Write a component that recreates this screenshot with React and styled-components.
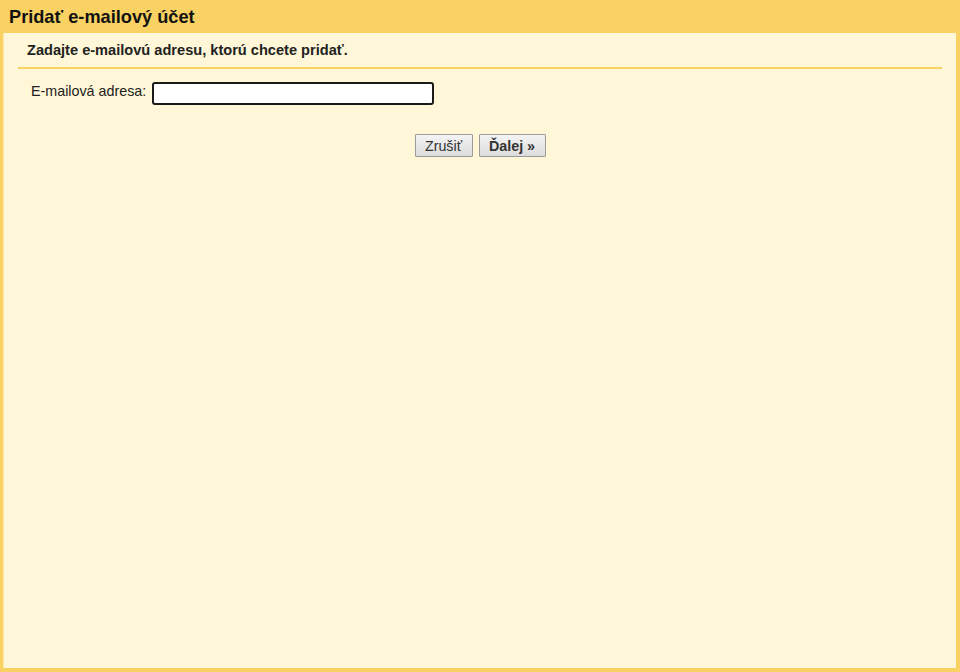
import React from 'react'
import styled, { createGlobalStyle } from 'styled-components'

const GlobalStyle = createGlobalStyle`
  html, body {
    margin: 0;
    padding: 0;
  }
  body {
    font-family: "Liberation Sans", Arial, sans-serif;
    color: #222;
  }
`

export default function App() {
  return (
    <>
      <GlobalStyle />
      <Frame>
        <TitleBar>Pridať e-mailový účet</TitleBar>
        <Panel>
          <Intro>Zadajte e-mailovú adresu, ktorú chcete pridať.</Intro>
          <Divider />
          <FieldRow>
            <Label htmlFor="email">E-mailová adresa:</Label>
            <TextInput id="email" type="text" />
          </FieldRow>
          <Actions>
            <Button type="button">Zrušiť</Button>
            <Button type="button" primary>Ďalej »</Button>
          </Actions>
        </Panel>
      </Frame>
    </>
  )
}

const Frame = styled.div`
  box-sizing: border-box;
  height: 672px;
  display: flex;
  flex-direction: column;
  background: #fad163;
  padding: 0 4px 4px 3px;
`

const TitleBar = styled.h1`
  box-sizing: border-box;
  margin: 0 0 0 -3px;
  height: 33px;
  display: flex;
  align-items: center;
  padding: 2px 0 0 9px;
  font-size: 18.2px;
  font-weight: bold;
  color: #111;
`

const Panel = styled.div`
  flex: 1;
  background: #fff7d7;
  border-left: 1px solid #ffe9a8;
  padding: 8px 14px 0 14px;
`

const Intro = styled.div`
  padding-left: 9px;
  font-size: 14.6px;
  font-weight: bold;
  line-height: 18px;
  color: #222;
`

const Divider = styled.div`
  height: 2px;
  background: #fad163;
  margin-top: 8px;
`

const FieldRow = styled.div`
  display: flex;
  align-items: center;
  gap: 6px;
  margin-top: 13px;
  padding-left: 13px;
`

const Label = styled.label`
  font-size: 14.3px;
  color: #222;
  margin-top: -5px;
`

const TextInput = styled.input`
  box-sizing: border-box;
  width: 282px;
  height: 23px;
  border: 2px solid #1a1a1a;
  border-radius: 3px;
  background: #fff;
  outline: none;
  padding: 0 4px;
  font: 14px "Liberation Sans", Arial, sans-serif;
`

const Actions = styled.div`
  display: flex;
  justify-content: center;
  gap: 6px;
  margin-top: 29px;
`

const Button = styled.button`
  box-sizing: border-box;
  height: 23px;
  width: ${p => (p.primary ? 67 : 58)}px;
  padding: 0;
  border: 1px solid #9a9a9a;
  border-radius: 1px;
  background: linear-gradient(#f4f4f4, #dcdcdc);
  font: ${p => (p.primary ? 'bold' : 'normal')} 14.3px "Liberation Sans", Arial, sans-serif;
  color: #333;
  cursor: pointer;
`
